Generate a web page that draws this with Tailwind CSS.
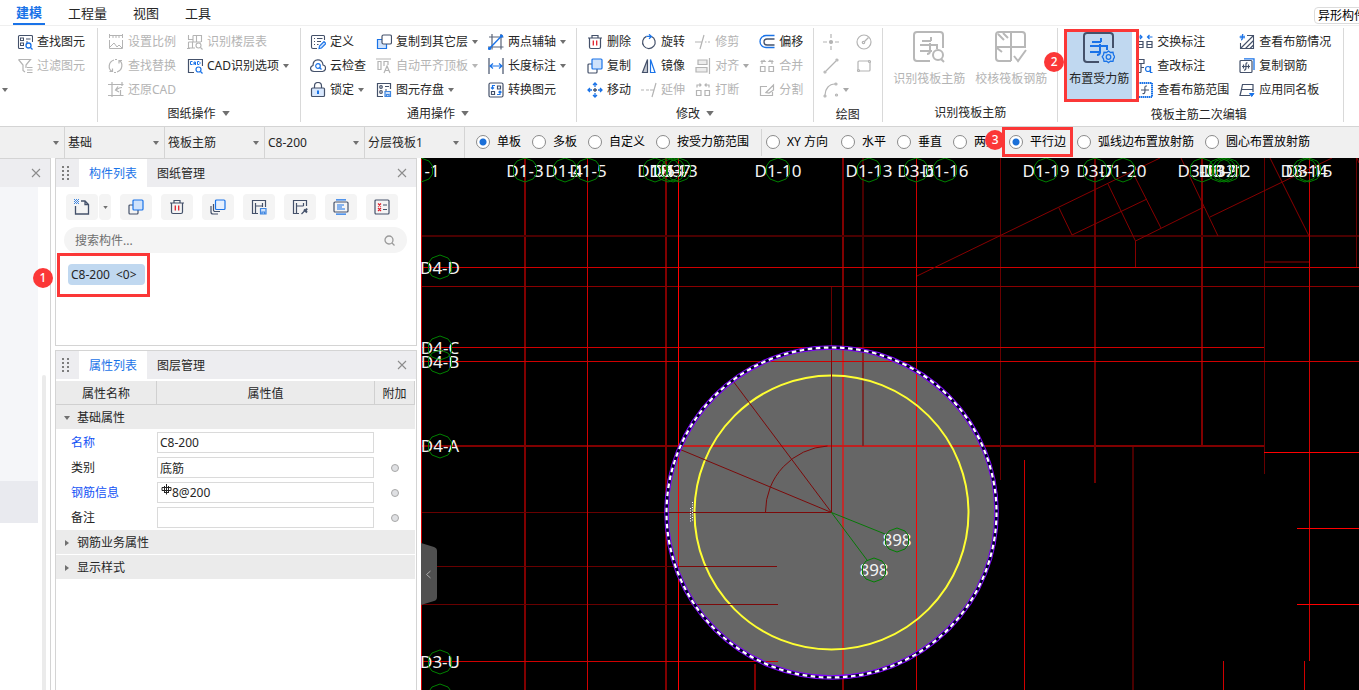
<!DOCTYPE html>
<html lang="zh-CN">
<head>
<meta charset="utf-8">
<title>筏板主筋 - 建模</title>
<script src="https://cdn.jsdelivr.net/npm/@tailwindcss/browser@4"></script>
</head>
<body class="flex h-screen flex-col overflow-hidden bg-white font-['Noto_Sans','Noto_Sans_CJK_SC',sans-serif] text-xs text-[#262626]">

<svg class="hidden" aria-hidden="true">
  <symbol id="caret" viewBox="0 0 6 4"><path d="M0 0h6L3 4z" fill="#707070"/></symbol>
  <symbol id="close" viewBox="0 0 10 10"><path d="M1 1l8 8M9 1l-8 8" stroke="#8c8c8c" stroke-width="1.1"/></symbol>
  <symbol id="grip" viewBox="0 0 7 15"><path d="M0 1h2M5 1h2M0 5h2M5 5h2M0 9h2M5 9h2M0 13h2M5 13h2" stroke="#7d7d7d" stroke-width="2"/></symbol>

  <g fill="none">
  <symbol id="find" viewBox="0 0 16 16" fill="none"><path d="M7 14.500H2.500a1 1 0 0 1-1-1v-11a1 1 0 0 1 1-1h12a1 1 0 0 1 1 1V8M9 5h4.500M9 8h2" stroke="#44516a" stroke-width="1.100"/><rect x="3.500" y="4" width="3" height="2.500" stroke="#44516a"/><rect x="3.500" y="9" width="3" height="2.500" stroke="#44516a"/><circle cx="11.500" cy="11.500" r="2.500" stroke="#1a73e8" stroke-width="1.300"/><path d="M13.500 13.500l2 2" stroke="#1a73e8" stroke-width="1.300"/></symbol>
  <symbol id="filter" viewBox="0 0 16 16" fill="none" stroke="#b4b4b4" stroke-width="1.200"><path d="M1.500 1.500h12L9 7v3M1.500 1.500L6 7v5.500l2 1.500M10 9.500h5.500M10 12h5.500M10 14.500h5.500"/></symbol>
  <symbol id="scale" viewBox="0 0 16 16" fill="none" stroke="#b4b4b4"><path d="M1 1.500h14M1.500 0v4M14.500 0v4M5 1.500V4M8 1.500V4M11 1.500V4M1.500 6v8.500h13V6M2 13l4-4 3 4 2-2 3 3"/></symbol>
  <symbol id="floor" viewBox="0 0 16 16" fill="none" stroke="#b4b4b4" stroke-width="1.100"><path d="M1.500 1v4.500H6M6 1.500h8.500v6.500M6 1.500v6M9.500 1.500V8M1.500 8H14M1.500 8v6H8M5.500 8v6M0 14.500h3"/><circle cx="11.500" cy="11.500" r="2.500"/><path d="M13.500 13.500l2 2"/></symbol>
  <symbol id="replace" viewBox="0 0 16 16" fill="none" stroke="#b4b4b4" stroke-width="1.200"><path d="M6 2C0 4 0 11 4 13.500M1.500 13.500h3v-3M9 14c6-2 6-9 2.500-11.500M14 2.500h-3v3M9 1.500H7M6 14.500h2"/></symbol>
  <symbol id="cad" viewBox="0 0 16 16" fill="none" stroke="#44516a" stroke-width="1.200"><path d="M7 14.500H1.500v-13h14V8"/><path d="M5.500 3.500h-2v3h2M7 7V4h1.500v3M7 5.500h1.500M10.500 3.500h1.500l1 1v1l-1 1h-1.500z" stroke="#1a73e8" stroke-width="1"/><circle cx="11.500" cy="11.500" r="2.500" stroke="#1a73e8"/><path d="M13.500 13.500l2 2" stroke="#1a73e8"/></symbol>
  <symbol id="restore" viewBox="0 0 16 16" fill="none" stroke="#b4b4b4" stroke-width="1.200"><path d="M4 0v15M0 2.500h15.500M0 13.500h15.500M14 5.500c-3 0-4 1-6 2.500M10 4.500L7.500 8l3.500 2M12.500 8v5M14 0v4"/></symbol>
  <symbol id="define" viewBox="0 0 16 16" fill="none" stroke="#44516a" stroke-width="1.100"><path d="M7 14.500H3a1.500 1.500 0 0 1-1.500-1.500V2.500A1 1 0 0 1 2.500 1.500h11a1 1 0 0 1 1 1V6M4 4.500h1M7 4.500h5.500M4 7.500h1M7 7.500h4M4 10.500h1M7 10.500h1.500"/><path d="M9 14.500l.5-2.500 4.500-4.500 2 2-4.500 4.500z" stroke="#1a73e8" fill="#cfe2fb"/></symbol>
  <symbol id="cloud" viewBox="0 0 16 16" fill="none" stroke="#44516a" stroke-width="1.200"><path d="M4 13.500C-.5 13-.3 8.500 3 7.500 3 0 12.500 0 13 7c3.500.7 3.500 6-.5 6.500z"/><circle cx="8" cy="8" r="2.300" stroke="#1a73e8"/><path d="M9.500 9.500l2 2" stroke="#1a73e8"/></symbol>
  <symbol id="lock" viewBox="0 0 16 16" fill="none" stroke="#44516a" stroke-width="1.200"><path d="M4.500 6V4a3.500 3.500 0 0 1 7 0v2"/><rect x="1.500" y="6" width="13" height="8.500" rx="1" fill="#d9e8fd"/><path d="M8 8.500V12" stroke="#1a73e8" stroke-width="2"/></symbol>
  <symbol id="copyto" viewBox="0 0 16 16" fill="none" stroke="#44516a" stroke-width="1.200"><path d="M6 5.500H1.500v9h9V10" stroke="#1a73e8" fill="#cfe2fb"/><rect x="6" y="1" width="9.500" height="9" rx="1.500" fill="#fff"/></symbol>
  <symbol id="aligntop" viewBox="0 0 16 16" fill="none" stroke="#b4b4b4" stroke-width="1.200"><path d="M0 1h15M2 3.500h3v8H2zM8 8V3.500h4V7M8 15l3-7 3 7M9 12.500h4"/></symbol>
  <symbol id="save" viewBox="0 0 16 16" fill="none" stroke="#44516a" stroke-width="1.200"><path d="M7 14.500H1.500v-13h13V7M9 4.500h4M9 8h2"/><circle cx="5" cy="5" r="1.300"/><circle cx="5" cy="10" r="1.300"/><path d="M9 9.500h5.500v5H9zM10.500 14.500v-2h2.500v2" stroke="#3f86e0" fill="#cfe2fb"/></symbol>
  <symbol id="axis" viewBox="0 0 16 16" fill="none" stroke="#5a6478" stroke-width="1.200"><path d="M4 0v15.500M13 0v15.500M1 3h14.500M0 13h15.500"/><path d="M1 15L13.500 2" stroke="#1a73e8" stroke-width="1.400"/><circle cx="13.500" cy="2" r="1" fill="#1a73e8" stroke="#1a73e8"/><circle cx="1.500" cy="14.500" r="1" fill="#1a73e8" stroke="#1a73e8"/></symbol>
  <symbol id="length" viewBox="0 0 16 16" fill="none" stroke="#44516a" stroke-width="1.200"><path d="M1 0v16M15 0v16"/><path d="M2 8h12M5 5.500L2 8l3 2.500M11 5.500L14 8l-3 2.500" stroke="#1a73e8"/></symbol>
  <symbol id="convert" viewBox="0 0 16 16" fill="none" stroke="#44516a" stroke-width="1.200"><rect x="1" y="1" width="14" height="14" rx="1.500"/><path d="M9.500 4h3v3h-3zM3.500 9.500h3v3h-3z"/><path d="M7 3.500H4.500V7M3 5.500L4.500 7 6 5.500M9 12.500h3V9M10.500 10.500L12 9l1.500 1.500" stroke="#1a73e8"/></symbol>
  <symbol id="trash" viewBox="0 0 16 16" fill="none" stroke="#44516a" stroke-width="1.200"><path d="M1 4h14M5 4V1.500h6V4M2.500 4v9a1.500 1.500 0 0 0 1.500 1.500h8a1.500 1.500 0 0 0 1.500-1.500V4"/><path d="M6.300 6.500v5M9.700 6.500v5" stroke="#e0202c" stroke-width="1.300"/></symbol>
  <symbol id="rotate" viewBox="0 0 16 16" fill="none" stroke="#44516a" stroke-width="1.200"><path d="M10.500 2.500A6.300 6.300 0 1 1 5.500 2.400"/><path d="M5.500 2.400H10M8 .3l2.500 2.200L8 4.700" stroke="#1a73e8"/></symbol>
  <symbol id="trim" viewBox="0 0 16 16" fill="none" stroke="#b4b4b4" stroke-width="1.200"><path d="M0 8h6.500M9 1L5 15M10 8h1.500M13 8h2"/></symbol>
  <symbol id="offset" viewBox="0 0 16 16" fill="none" stroke-width="1.300"><path d="M15.500 1.500H7a5.500 5.500 0 0 0 0 12h8.500" stroke="#1a73e8"/><path d="M15.500 5H8a3 3 0 0 0 0 6h7.500" stroke="#44516a"/></symbol>
  <symbol id="copy" viewBox="0 0 16 16" fill="none" stroke="#44516a" stroke-width="1.200"><path d="M5 6H2a1 1 0 0 0-1 1v7a1 1 0 0 0 1 1h7a1 1 0 0 0 1-1v-3"/><rect x="5" y="1" width="10" height="10" rx="1" fill="#cfe2fb" stroke="#1a73e8"/></symbol>
  <symbol id="mirror" viewBox="0 0 16 16" fill="none" stroke-width="1.200"><path d="M6.500 1.500v13H1.500z" fill="#c4c9d2" stroke="#44516a"/><path d="M9.500 1.500v13H14z" stroke="#1a73e8"/></symbol>
  <symbol id="align" viewBox="0 0 16 16" fill="none" stroke="#b4b4b4" stroke-width="1.200"><path d="M3 2h9v4.500H3zM1 9.500h11V14H1zM14.500 0v16" fill="#ececec"/></symbol>
  <symbol id="merge" viewBox="0 0 16 16" fill="none" stroke="#b4b4b4" stroke-width="1.200"><path d="M1.500 8.500H6v5H1.500zM10 8.500h4.500v5H10zM3 2v4M1.500 3.500H6L4.500 2M13 2v4M14.500 3.500H10L11.500 2"/></symbol>
  <symbol id="move" viewBox="0 0 16 16" fill="none" stroke="#1a73e8" stroke-width="1.300"><path d="M6 3l2-2 2 2M6 13l2 2 2-2M3 6L1 8l2 2M13 6l2 2-2 2M8 1v4M8 11v4M1 8h4M11 8h4"/><path d="M6 8h4M8 6v4" stroke="#44516a"/></symbol>
  <symbol id="extend" viewBox="0 0 16 16" fill="none" stroke="#b4b4b4" stroke-width="1.200"><path d="M0 8h3M5 8h3M9 8h4M15 1l-4 14"/></symbol>
  <symbol id="break" viewBox="0 0 16 16" fill="none" stroke="#b4b4b4" stroke-width="1.200"><path d="M1.500 8.500H6v5H1.500zM10 8.500h4.500v5H10zM2 5.500V3h4M4.500 1.500L6 3 4.500 4.500M14 5.500V3h-4M11.500 1.500L10 3l1.500 1.500"/></symbol>
  <symbol id="split" viewBox="0 0 16 16" fill="none" stroke="#b4b4b4" stroke-width="1.200"><path d="M8 4.500H1.500v9h12V10M7 10.500L14.500 3v5L10 11z"/></symbol>
  <symbol id="point" viewBox="0 0 16 16" fill="none" stroke="#b4b4b4" stroke-width="1.200"><path d="M8 0v4M8 12v4M0 8h4M12 8h4"/><circle cx="8" cy="8" r="1.500" fill="#b4b4b4"/></symbol>
  <symbol id="circle" viewBox="0 0 16 16" fill="none" stroke="#b4b4b4" stroke-width="1.200"><circle cx="8" cy="8" r="7"/><circle cx="7.500" cy="8.500" r="1.200"/><path d="M8.500 7.500l4-4"/></symbol>
  <symbol id="line" viewBox="0 0 16 16" fill="none" stroke="#b4b4b4" stroke-width="1.200"><path d="M3 13L13 3"/><circle cx="2" cy="14" r="1"/><circle cx="14" cy="2" r="1"/></symbol>
  <symbol id="rect" viewBox="0 0 16 16" fill="none" stroke="#b4b4b4" stroke-width="1.200"><rect x="2" y="3" width="12" height="10" rx="1"/><circle cx="2.500" cy="12.500" r="1" fill="#fff"/><circle cx="13.500" cy="3.500" r="1" fill="#fff"/></symbol>
  <symbol id="arc" viewBox="0 0 16 16" fill="none" stroke="#b4b4b4" stroke-width="1.200"><path d="M2 13C2 7 6 2 12 2"/><circle cx="2" cy="14" r="1"/><circle cx="13" cy="2" r="1"/><circle cx="13.500" cy="13" r="1"/></symbol>
  <symbol id="swap" viewBox="0 0 16 16" fill="none" stroke="#44516a" stroke-width="1.200"><path d="M1.500 7.500H6v6H1.500zM10 7.500h5v6h-5zM1.500 10.500H6M10 10.500h5"/><path d="M0 3h5M3 1l2 2-2 2M15.500 3h-5M12.500 1l-2 2 2 2" stroke="#1a73e8"/></symbol>
  <symbol id="editmark" viewBox="0 0 16 16" fill="none" stroke="#44516a" stroke-width="1.200"><path d="M1 1.500h6v4H1M4 5.500v9M4 9.500h3M1 14.500h3"/><circle cx="11" cy="11" r="2.500" stroke="#1a73e8"/><path d="M13.500 8v6.500h2" stroke="#1a73e8"/></symbol>
  <symbol id="range" viewBox="0 0 16 16" fill="none" stroke="#1a73e8" stroke-width="2"><rect x="1" y="1" width="14" height="14" stroke-dasharray="1.500 .5"/><path d="M10 4c-3-.5-2 2-2 4s0 4-2.500 3.500M4 8h8" stroke="#44516a" stroke-width="1.100"/></symbol>
  <symbol id="status" viewBox="0 0 16 16" fill="none" stroke="#44516a" stroke-width="1.100"><path d="M8 1.500h6.500v13h-13V9M2 14L14 2M6.500 14.500l8-8M11 14.500l3.500-3.500"/><path d="M4.500 0c-1.500 0-1 1.500-1 3s0 3-1.500 3M.5 3H6M2 1.500v3M5 1.500v3" stroke="#1a73e8"/></symbol>
  <symbol id="copybar" viewBox="0 0 16 16" fill="none" stroke="#44516a" stroke-width="1.200"><rect x="1" y="2.500" width="12" height="12" rx="1"/><path d="M8.500 5c-2-.5-1.500 2-1.500 3.500s0 4-2 3.500M3 8.500h8M9.500 6.500v4M4.500 6.500v4"/><path d="M5 .8h10V12" stroke="#1a73e8" stroke-width="1.300"/></symbol>
  <symbol id="slab" viewBox="0 0 16 16" fill="none" stroke="#44516a" stroke-width="1.200"><path d="M3.500 2.500H14v5H2.500zM2.500 7.500H13M2.500 7.500L1 13.500h10M14 7.500V10"/><path d="M10.500 11.500h4.500l-2.300 3z" fill="#1a73e8" stroke="#1a73e8" stroke-width="1"/></symbol>

  <symbol id="recog" viewBox="0 0 32 32" fill="none" stroke="#b8b8b8" stroke-width="2"><path d="M17 30H4a3 3 0 0 1-3-3V4a3 3 0 0 1 3-3h23a3 3 0 0 1 3 3v13M18 6v4M9 10h9M17 12v8q0 3-3 3M7 14h17v4M7 20h12"/><circle cx="25" cy="24" r="5"/><path d="M28 28l3 3"/></symbol>
  <symbol id="verify" viewBox="0 0 32 32" fill="none" stroke="#b8b8b8" stroke-width="2"><path d="M16 30H4a3 3 0 0 1-3-3V4a3 3 0 0 1 3-3h23a3 3 0 0 1 3 3v12H1M16 1v29M3 3l6 6M8 2l5 5M2 17l5 4M19 25l4 5 8-11"/></symbol>
  <symbol id="place" viewBox="0 0 32 32" fill="none" stroke="#44516a" stroke-width="2"><path d="M16 30H4a3 3 0 0 1-3-3V4a3 3 0 0 1 3-3h23a3 3 0 0 1 3 3v12"/><path d="M18 6v4M9 10h9M17 12v8q0 3-3 3M7 14h17v4M7 20h11" stroke="#1a73e8" stroke-width="2"/><path d="M25.500 19l2 1.500 2.500-.2.500 2.500 1.300 2-1.300 2-.5 2.500-2.500-.2-2 1.500-2-1.500-2.500.2-.5-2.500-1.300-2 1.300-2 .5-2.500 2.500.2z" stroke="#1a73e8" stroke-width="1.300"/><circle cx="25.500" cy="25" r="2.300" stroke="#1a73e8" stroke-width="1.300"/></symbol>

  <symbol id="new" viewBox="0 0 16 16" fill="none" stroke="#44516a" stroke-width="1.300"><path d="M1.500 7v8h13V5.500L11 2H7M11 2v3.500h3.500"/><path d="M0 .5h5M0 2.500h5M0 4.500h5M1 1.500h4M1 3.500h4" stroke="#3f86e0" stroke-width="1" stroke-dasharray="1 1"/></symbol>
  <symbol id="layers" viewBox="0 0 16 16" fill="none" stroke="#44516a" stroke-width="1.200"><path d="M3.500 5v6a1.500 1.500 0 0 0 1.500 1.500h5M1 7v6a2 2 0 0 0 2 2h5"/><rect x="5.500" y="1" width="9.500" height="9.500" rx="1" fill="#e6f0fe" stroke="#1a73e8"/></symbol>
  <symbol id="hsave" viewBox="0 0 16 16" fill="none" stroke="#44516a" stroke-width="1.200"><path d="M7 14.500H1.500v-13h13V8M4.500 14V4M11.500 8V4M4.500 7h7"/><path d="M9.500 9.500h5.500v5.500H9.500zM11 15v-2h2.500v2" stroke="#3f86e0" fill="#cfe2fb"/></symbol>
  <symbol id="hpick" viewBox="0 0 16 16" fill="none" stroke="#44516a" stroke-width="1.200"><path d="M7 14.500H1.500v-13h13V7M4.500 14V4M11.500 7V4M4.500 7h7M9.500 15l4-4"/><path d="M12 10.500l3 3M13.500 12l1.500-2.500" stroke-width="2"/></symbol>
  <symbol id="list" viewBox="0 0 16 16" fill="none" stroke="#44516a" stroke-width="1.200"><rect x="1" y="3" width="14" height="10" rx="1"/><path d="M3 .8h10M3 15.200h10M4 6h7M4 8h5M4 10h8" stroke="#1a73e8"/></symbol>
  <symbol id="check" viewBox="0 0 16 16" fill="none" stroke="#44516a" stroke-width="1.200"><rect x="1" y="1" width="14" height="14" rx="1"/><path d="M9 6h4M9 10.500h4"/><path d="M4 4.500l3 3M7 4.500l-3 3M4 9l3 3M7 9l-3 3" stroke="#e0202c"/></symbol>
  </g>
</svg>

<header class="flex h-[26px] shrink-0 items-stretch border-b border-[#efefef] text-[13px]">
  <nav class="flex gap-[26px] pl-[13px] [&_a]:flex [&_a]:items-center [&_a]:pt-[3px]">
    <a href="#" class="-mr-[3px] border-b-2 border-[#1a73e8] px-[3px] font-bold text-[#1a73e8]">建模</a>
    <a href="#">工程量</a>
    <a href="#">视图</a>
    <a href="#">工具</a>
  </nav>
  <div class="ml-auto mt-[7px] w-[45px] overflow-hidden">
    <button class="h-[17px] w-[60px] whitespace-nowrap rounded-sm border border-[#dcdcdc] pl-[3px] text-left text-xs leading-[15px] text-black">异形构件</button>
  </div>
</header>

<section aria-label="功能区" class="relative flex h-[100px] shrink-0 items-start whitespace-nowrap pt-[2px] [&_.u]:flex [&_.u]:h-6 [&_.u]:items-center [&_.u]:gap-1 [&_.u:disabled]:text-[#b4b4b4] [&_.u_svg:first-child]:size-4 [&_.k]:h-1 [&_.k]:w-[6px] [&>div]:flex [&>div]:h-[94px] [&>div]:flex-col [&>div]:border-r [&>div]:border-[#d9d9d9] [&>div]:pt-[2px] [&_h2]:flex [&_h2]:h-6 [&_h2]:items-center [&_h2]:justify-center [&_h2]:gap-[6px]">
  <div class="pr-[12px]">
    <div class="flex items-end gap-[9px] pl-[2px]">
      <button aria-label="更多" class="h-6"><svg class="k"><use href="#caret"/></svg></button>
      <div class="h-[72px]">
        <button class="u"><svg><use href="#find"/></svg>查找图元</button>
        <button class="u" disabled><svg><use href="#filter"/></svg>过滤图元</button>
      </div>
    </div>
  </div>
  <div class="pl-[10px] pr-[11px]">
    <div class="flex gap-[11px]">
      <div>
        <button class="u" disabled><svg><use href="#scale"/></svg>设置比例</button>
        <button class="u" disabled><svg><use href="#replace"/></svg>查找替换</button>
        <button class="u" disabled><svg><use href="#restore"/></svg>还原CAD</button>
      </div>
      <div>
        <button class="u" disabled><svg><use href="#floor"/></svg>识别楼层表</button>
        <button class="u"><svg><use href="#cad"/></svg>CAD识别选项<svg class="k"><use href="#caret"/></svg></button>
      </div>
    </div>
    <h2 class="pt-[3px]">图纸操作<svg class="h-[5px] w-2"><use href="#caret"/></svg></h2>
  </div>
  <div class="pl-[9px] pr-[10px]">
    <div class="flex gap-[10px]">
      <div>
        <button class="u"><svg><use href="#define"/></svg>定义</button>
        <button class="u"><svg><use href="#cloud"/></svg>云检查</button>
        <button class="u"><svg><use href="#lock"/></svg>锁定<svg class="k"><use href="#caret"/></svg></button>
      </div>
      <div>
        <button class="u"><svg><use href="#copyto"/></svg>复制到其它层<svg class="k"><use href="#caret"/></svg></button>
        <button class="u" disabled><svg><use href="#aligntop"/></svg>自动平齐顶板<svg class="k opacity-50"><use href="#caret"/></svg></button>
        <button class="u"><svg><use href="#save"/></svg>图元存盘<svg class="k"><use href="#caret"/></svg></button>
      </div>
      <div>
        <button class="u"><svg><use href="#axis"/></svg>两点辅轴<svg class="k"><use href="#caret"/></svg></button>
        <button class="u"><svg><use href="#length"/></svg>长度标注<svg class="k"><use href="#caret"/></svg></button>
        <button class="u"><svg><use href="#convert"/></svg>转换图元</button>
      </div>
    </div>
    <h2 class="pt-[3px]">通用操作<svg class="h-[5px] w-2"><use href="#caret"/></svg></h2>
  </div>
  <div class="px-[10px]">
    <div class="flex gap-[10px]">
      <div>
        <button class="u"><svg><use href="#trash"/></svg>删除</button>
        <button class="u"><svg><use href="#copy"/></svg>复制</button>
        <button class="u"><svg><use href="#move"/></svg>移动</button>
      </div>
      <div>
        <button class="u"><svg><use href="#rotate"/></svg>旋转</button>
        <button class="u"><svg><use href="#mirror"/></svg>镜像</button>
        <button class="u" disabled><svg><use href="#extend"/></svg>延伸</button>
      </div>
      <div>
        <button class="u" disabled><svg><use href="#trim"/></svg>修剪</button>
        <button class="u" disabled><svg><use href="#align"/></svg>对齐<svg class="k opacity-60"><use href="#caret"/></svg></button>
        <button class="u" disabled><svg><use href="#break"/></svg>打断</button>
      </div>
      <div>
        <button class="u"><svg><use href="#offset"/></svg>偏移</button>
        <button class="u" disabled><svg><use href="#merge"/></svg>合并</button>
        <button class="u" disabled><svg><use href="#split"/></svg>分割</button>
      </div>
    </div>
    <h2 class="pt-[3px]">修改<svg class="h-[5px] w-2"><use href="#caret"/></svg></h2>
  </div>
  <div class="pl-[9px] pr-[10px]">
    <div class="flex gap-[7px]">
      <div>
        <button class="u" disabled aria-label="点"><svg><use href="#point"/></svg></button>
        <button class="u" disabled aria-label="直线"><svg><use href="#line"/></svg></button>
        <button class="u" disabled aria-label="弧"><svg><use href="#arc"/></svg><svg class="k opacity-60"><use href="#caret"/></svg></button>
      </div>
      <div>
        <button class="u" disabled aria-label="圆"><svg><use href="#circle"/></svg></button>
        <button class="u" disabled aria-label="矩形"><svg><use href="#rect"/></svg></button>
      </div>
    </div>
    <h2 class="pt-[5px]">绘图</h2>
  </div>
  <div class="px-[10px]">
    <div class="flex h-[72px] gap-[10px] text-[#b4b4b4] [&_svg]:size-8 [&_svg]:shrink-0">
      <button disabled class="flex flex-col items-center gap-[8px] pt-px"><svg><use href="#recog"/></svg>识别筏板主筋</button>
      <button disabled class="flex flex-col items-center gap-[8px] pt-px"><svg><use href="#verify"/></svg>校核筏板钢筋</button>
    </div>
    <h2 class="pt-[5px]">识别筏板主筋</h2>
  </div>
  <div class="pl-[8px] pr-[12px]">
    <div class="relative flex">
      <button class="mr-[5px] mt-[2px] flex h-[67px] w-[66px] flex-col items-center gap-[7px] bg-[#c0d8f0]"><svg class="size-8 shrink-0"><use href="#place"/></svg>布置受力筋</button>
      <div>
        <button class="u"><svg><use href="#swap"/></svg>交换标注</button>
        <button class="u"><svg><use href="#editmark"/></svg>查改标注</button>
        <button class="u"><svg><use href="#range"/></svg>查看布筋范围</button>
      </div>
      <div class="ml-[10px]">
        <button class="u"><svg><use href="#status"/></svg>查看布筋情况</button>
        <button class="u"><svg><use href="#copybar"/></svg>复制钢筋</button>
        <button class="u"><svg><use href="#slab"/></svg>应用同名板</button>
      </div>
      <div class="pointer-events-none absolute -left-[2px] -top-px h-[73px] w-[75px] border-[3px] border-[#fb3737]"></div>
      <div class="absolute -left-[22px] top-[22px] flex size-5 items-center justify-center rounded-full bg-[#fb3737] font-medium text-white">2</div>
    </div>
    <h2 class="pt-[5px]">筏板主筋二次编辑</h2>
  </div>
</section>

<form class="flex h-8 shrink-0 items-stretch whitespace-nowrap border-t border-[#d4d4d4] bg-[#f0f0f0] [&_select]:w-full [&_select]:appearance-none [&_select]:pl-[3px] [&_.s]:flex [&_.s]:w-[100px] [&_.s]:items-center [&_.s]:border-r [&_.s]:border-[#d4d4d4] [&_.s]:pr-[5px] [&_.s_svg]:h-1 [&_.s_svg]:w-[6px] [&_.s_svg]:shrink-0 [&_.r]:flex [&_.r]:items-center [&_.r]:gap-[11px] [&_.r]:pb-[2px] [&_.r]:text-black [&_.r_label]:flex [&_.r_label]:items-center [&_.r_label]:gap-[7px] [&_input]:size-[14px] [&_input]:appearance-none [&_input]:rounded-full [&_input]:border [&_input]:border-[#8a8a8a] [&_input]:bg-white">
  <div class="s max-w-[65px]"><select aria-label="楼层"><option></option></select><svg><use href="#caret"/></svg></div>
  <div class="s"><select aria-label="构件大类"><option>基础</option></select><svg><use href="#caret"/></svg></div>
  <div class="s"><select aria-label="构件类型"><option>筏板主筋</option></select><svg><use href="#caret"/></svg></div>
  <div class="s"><select aria-label="构件"><option>C8-200</option></select><svg><use href="#caret"/></svg></div>
  <div class="s"><select aria-label="分层"><option>分层筏板1</option></select><svg><use href="#caret"/></svg></div>
  <div class="r my-[2px] border-r border-[#d4d4d4] pl-[11px] pr-3">
    <label><input type="radio" name="scope" checked class="checked:bg-[radial-gradient(circle,#1a6fd8_3px,white_4px)]">单板</label>
    <label><input type="radio" name="scope">多板</label>
    <label><input type="radio" name="scope">自定义</label>
    <label><input type="radio" name="scope">按受力筋范围</label>
  </div>
  <div class="r my-[2px] pl-1">
    <label class="pr-[2px]"><input type="radio" name="dir">XY 方向</label>
    <label><input type="radio" name="dir">水平</label>
    <label><input type="radio" name="dir">垂直</label>
    <label><input type="radio" name="dir">两点</label>
    <label class="relative"><input type="radio" name="dir" checked class="checked:bg-[radial-gradient(circle,#1a6fd8_3px,white_4px)]">平行边
      <span class="pointer-events-none absolute -left-[7px] -top-[7px] h-[30px] w-[71px] border-[3px] border-[#fb3737]"></span>
      <span class="absolute -left-[24px] -top-[4px] flex size-5 items-center justify-center rounded-full bg-[#fb3737] font-medium text-white">3</span>
    </label>
    <label><input type="radio" name="dir">弧线边布置放射筋</label>
    <label><input type="radio" name="dir">圆心布置放射筋</label>
  </div>
</form>

<main class="flex min-h-0 flex-1">
  <aside class="flex w-[51px] shrink-0 flex-col border-r border-t border-[#d4d4d4]">
    <div class="flex h-7 shrink-0 items-center justify-end bg-[#ededf0] pr-[9px]"><button aria-label="关闭"><svg class="size-[10px]"><use href="#close"/></svg></button></div>
    <div class="flex flex-1">
      <div class="w-[38px]">
        <div class="h-[294px] bg-[#f5f6f9]"></div>
        <div class="h-[42px] bg-[#e9eaef]"></div>
      </div>
      <div class="ml-1 mt-[188px] w-1 rounded-t bg-[#ebebeb]"></div>
    </div>
  </aside>

  <div class="ml-1 flex w-[362px] shrink-0 flex-col gap-1">
    <section class="h-[188px] border border-[#d4d4d4]">
      <div class="flex h-7 items-stretch bg-[#ededf0] pr-[9px]">
        <svg class="ml-[6px] mr-[10px] h-[15px] w-[7px] self-center"><use href="#grip"/></svg>
        <button class="w-[68px] bg-white pt-[2px] text-[#1a73e8]">构件列表</button>
        <button class="w-[68px] pt-[2px]">图纸管理</button>
        <button aria-label="关闭" class="ml-auto"><svg class="size-[10px]"><use href="#close"/></svg></button>
      </div>
      <div class="mt-[7px] flex gap-[9px] pl-[10px] [&_button]:flex [&_button]:h-[26px] [&_button]:w-8 [&_button]:items-center [&_button]:justify-center [&_button]:rounded-sm [&_button]:bg-[#f4f4f4] [&_svg]:size-4">
        <div class="flex gap-px"><button aria-label="新建"><svg><use href="#new"/></svg></button><button aria-label="新建选项" class="max-w-3"><svg class="max-h-[3px] max-w-[5px]"><use href="#caret"/></svg></button></div>
        <button aria-label="复制"><svg><use href="#copy"/></svg></button>
        <button aria-label="删除"><svg><use href="#trash"/></svg></button>
        <button aria-label="层间复制"><svg><use href="#layers"/></svg></button>
        <button aria-label="存盘"><svg><use href="#hsave"/></svg></button>
        <button aria-label="提取"><svg><use href="#hpick"/></svg></button>
        <button aria-label="列表"><svg><use href="#list"/></svg></button>
        <button aria-label="检查"><svg><use href="#check"/></svg></button>
      </div>
      <label class="ml-2 mr-[9px] mt-[7px] flex h-[26px] items-center rounded-full bg-[#f4f4f4] pl-[11px] pr-3">
        <input type="text" placeholder="搜索构件..." aria-label="搜索构件" class="min-w-0 flex-1 bg-transparent pt-[2px] outline-none placeholder:text-[#6f6f6f]">
        <svg class="size-[11px]" viewBox="0 0 11 11" fill="none" stroke="#9a9a9a" stroke-width="1.300"><circle cx="5" cy="5" r="4"/><path d="M8 8l2.500 2.500"/></svg>
      </label>
      <div class="relative ml-3 mt-[11px] w-[77px]">
        <button class="flex h-[21px] w-full items-center gap-[6px] whitespace-nowrap rounded-sm bg-[#c0d8f0] pl-[3px]"><span>C8-200</span><span>&lt;0&gt;</span></button>
        <div class="pointer-events-none absolute -left-[11px] -top-[11px] h-11 w-[93px] border-[3px] border-[#fb3737]"></div>
        <div class="absolute -left-[35px] top-[4px] flex size-5 items-center justify-center rounded-full bg-[#fb3737] font-medium text-white">1</div>
      </div>
    </section>

    <section class="min-h-0 flex-1 border border-b-0 border-[#d4d4d4]">
      <div class="flex h-7 items-stretch bg-[#ededf0] pr-[9px]">
        <svg class="ml-[6px] mr-[10px] h-[15px] w-[7px] self-center"><use href="#grip"/></svg>
        <button class="w-[68px] bg-white pt-[2px] text-[#1a73e8]">属性列表</button>
        <button class="w-[68px] pt-[2px]">图层管理</button>
        <button aria-label="关闭" class="ml-auto"><svg class="size-[10px]"><use href="#close"/></svg></button>
      </div>
      <table class="mt-[2px] w-[359px] table-fixed border-separate border-spacing-0 [&_th]:font-normal [&_thead_th]:h-6 [&_thead_th]:border-b [&_thead_th]:border-r [&_thead_th]:border-[#d0d0d0] [&_thead_th]:bg-[#ebebeb] [&_thead_th]:pt-[2px] [&_tbody_td]:pr-px [&_tbody_tr]:h-[25px] [&_tbody_th]:pl-[15px] [&_tbody_th]:text-left [&_.g]:border-b [&_.g]:border-white [&_.g]:bg-[#ebebeb] [&_input]:block [&_input]:h-[21px] [&_input]:w-full [&_input]:border [&_input]:border-[#dadada] [&_input]:bg-white [&_input]:pl-[2px] [&_i]:mx-auto [&_i]:block [&_i]:size-2 [&_i]:rounded-full [&_i]:border [&_i]:border-[#a8a8a8] [&_i]:bg-[#dfe0e3]">
        <colgroup><col class="w-[101px]"><col><col class="w-[40px]"></colgroup>
        <thead><tr><th>属性名称</th><th>属性值</th><th>附加</th></tr></thead>
        <tbody>
          <tr><td colspan="3" class="g"><button class="flex items-center gap-[7px] pl-2 pt-px"><svg class="h-[4px] w-[6px]"><use href="#caret"/></svg>基础属性</button></td></tr>
          <tr><th class="text-[#1453f5]"><label for="p1">名称</label></th><td><input id="p1" type="text" value="C8-200"></td><td></td></tr>
          <tr><th><label for="p2">类别</label></th><td><input id="p2" type="text" value="底筋"></td><td><i></i></td></tr>
          <tr><th class="text-[#1453f5]"><label for="p3">钢筋信息</label></th><td class="relative"><input id="p3" type="text" value="8@200" class="indent-[12px]">
            <svg class="absolute left-[4px] top-[4px] size-[11px]" viewBox="0 0 11 11" fill="none" stroke="#262626"><path d="M5.500 0v10.500M3.500 2v7M7.500 2v7M1 3.500h9v3H1zM3 8.500h5"/></svg></td><td><i></i></td></tr>
          <tr><th><label for="p4">备注</label></th><td><input id="p4" type="text"></td><td><i></i></td></tr>
          <tr><td colspan="3" class="g"><button class="flex items-center gap-[7px] pl-2 pt-px"><svg class="h-[4px] w-[6px] -rotate-90"><use href="#caret"/></svg>钢筋业务属性</button></td></tr>
          <tr><td colspan="3" class="g"><button class="flex items-center gap-[7px] pl-2 pt-px"><svg class="h-[4px] w-[6px] -rotate-90"><use href="#caret"/></svg>显示样式</button></td></tr>
        </tbody>
      </table>
    </section>
  </div>

  <section aria-label="绘图区" class="relative ml-1 min-w-0 flex-1 overflow-hidden bg-black">
    <svg class="block h-full w-full" viewBox="421 158 938 532" preserveAspectRatio="xMinYMin slice" fill="none">
      <defs><path id="hex" d="M0-12L8-9 11.500-4V4L8 9 0 12-8 9-11.500 4V-4L-8-9z"/></defs>
      <circle cx="831.500" cy="512.500" r="165" fill="#666"/>
      <!-- axis grid -->
      <g shape-rendering="crispEdges">
      <g stroke="#800000" stroke-width="2"><path d="M525 158v532M666 158v532M843 158v532M1202 158v288M421 446h843M755 664v26"/></g>
      <path d="M843 348v329" stroke="#c02c2c" stroke-width="2"/>
      <path d="M681 446h301" stroke="#c02020" stroke-width="2"/>
      <g stroke="#4a0000" stroke-width="2"><path d="M421 236h938M863 158v288M1133 447v243M1264 262h45"/></g>
      <path d="M863 350v96" stroke="#752b2b" stroke-width="2"/>
      <path d="M1095 158v325" stroke="#700000" stroke-width="2"/>
      <g stroke="#680000"><path d="M1000.500 158v322M1264.500 158v316M1356.500 158v109M831.500 286v226M421 512.500h410M421 566.500h356M421 604.500h357"/></g>
      <path d="M421 286.500h938" stroke="#8a0000"/>
      <g stroke="#d00000"><path d="M421.500 158v532M587.500 158v532M916.500 158v532M1309.500 158v503M1024.500 460v230M1223.500 661v29M1304.500 661v29M421 267.500h938M421 347.500h843M421 361.500h938M421 661.500h357"/></g>
      <g stroke="#f00"><path d="M678.500 158v532M916.500 370v285M1264 452.500h95M1297 528.500h62M1297 604.500h62"/></g>
      </g>
      <path stroke="#860000" d="M917 276L1160 158M1059 208l13 27 75-36M1108 184l27.500 57 68.500-34M1135.500 241v26M1135 177l26 51M1181 158l37 78M1210 217l122-59M1270 158l39 78M1357 158l2 5"/>
      <!-- raft slab -->
      <circle cx="831.500" cy="512.500" r="137" stroke="#ffff32" stroke-width="2"/>
      <path stroke="#7c0a0a" d="M733 381l98.500 131.500L679 449M666 512.500h165.500M831.500 348v164M765.500 512a66 66 0 0 1 62-66M678 566.500h99M695 604.500h83"/>
      <path stroke="#067806" d="M831.500 512.500l53.500 21.500M831.500 512.500l35.500 47.500"/>
      <circle cx="831.500" cy="512.500" r="165" stroke="#8000ff" stroke-width="4.500"/>
      <circle cx="831.500" cy="512.500" r="165" stroke="#000028" stroke-width="2.600"/>
      <circle cx="831.500" cy="512.500" r="165" stroke="#fff" stroke-width="2.200" stroke-dasharray="4.600 3.500"/>
      <path d="M692.500 502v20M690.500 508v14" stroke="#fff" stroke-dasharray="1 1.500"/>
      <!-- axis labels -->
      <g fill="#f4f4f4" font-size="17" text-anchor="middle" class="font-['Noto_Sans',sans-serif]">
        <text x="421" y="177">D1-1</text><text x="525" y="177">D1-3</text><text x="564" y="177">D1-4</text><text x="588" y="177">D1-5</text>
        <text x="656" y="177">D1-6</text><text x="668" y="177">D3-1</text><text x="672" y="177">D1-7</text><text x="679" y="177">D3-3</text>
        <text x="778" y="177">D1-10</text><text x="869" y="177">D1-13</text><text x="916" y="177">D3-6</text><text x="945" y="177">D1-16</text>
        <text x="1046" y="177">D1-19</text><text x="1095" y="177">D3-7</text><text x="1123" y="177">D1-20</text>
        <text x="1201" y="177">D3-10</text><text x="1219" y="177">D3-9</text><text x="1222" y="177">D1-21</text><text x="1227" y="177">D3-12</text>
        <text x="1304" y="177">D3-14</text><text x="1309" y="177">D3-15</text>
        <text x="440" y="274">D4-D</text><text x="440" y="354">D4-C</text><text x="440" y="368">D4-B</text><text x="440" y="452">D4-A</text><text x="440" y="668">D3-U</text><text x="440" y="702">D3-T</text>
        <text x="897" y="546">898</text><text x="874" y="576">898</text>
      </g>
      <g stroke="#008000">
        <use href="#hex" x="421" y="170"/><use href="#hex" x="525" y="170"/><use href="#hex" x="565" y="170"/><use href="#hex" x="588" y="170"/><use href="#hex" x="655" y="170"/><use href="#hex" x="668" y="170"/><use href="#hex" x="673" y="170"/><use href="#hex" x="679" y="170"/><use href="#hex" x="778" y="170"/><use href="#hex" x="869" y="170"/><use href="#hex" x="916" y="170"/><use href="#hex" x="945" y="170"/><use href="#hex" x="1046" y="170"/><use href="#hex" x="1095" y="170"/><use href="#hex" x="1123" y="170"/><use href="#hex" x="1202" y="170"/><use href="#hex" x="1220" y="170"/><use href="#hex" x="1224" y="170"/><use href="#hex" x="1228" y="170"/><use href="#hex" x="1305" y="170"/><use href="#hex" x="1309" y="170"/>
        <use href="#hex" x="440" y="267"/><use href="#hex" x="440" y="348"/><use href="#hex" x="440" y="362"/><use href="#hex" x="440" y="446"/><use href="#hex" x="440" y="662"/><use href="#hex" x="440" y="696"/><use href="#hex" x="897" y="540"/><use href="#hex" x="874" y="570"/>
      </g>
    </svg>
    <button aria-label="收起面板" class="absolute left-0 top-[385px] h-[62px] w-4">
      <svg class="h-full w-full" viewBox="0 0 16 62" fill="none"><path d="M0 0L13 4q3 1 3 4v46q0 3-3 4L0 62z" fill="#505050"/><path d="M9.500 28L5.500 31.500l4 3.500" stroke="#aaa"/></svg>
    </button>
  </section>
</main>
</body>
</html>
